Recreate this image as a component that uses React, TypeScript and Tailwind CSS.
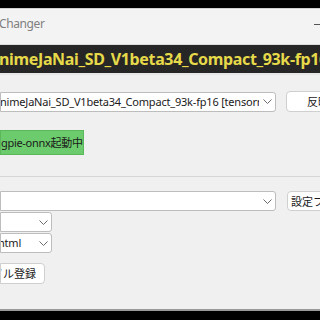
import React from "react";

const font = { fontFamily: '"Noto Sans", "Noto Sans CJK JP", sans-serif' };

const Chevron: React.FC = () => (
  <svg width="9" height="5" viewBox="0 0 9 5" className="shrink-0">
    <path d="M0.5 0.5 L4.5 4.5 L8.5 0.5" fill="none" stroke="#6b6b6b" strokeWidth="1" />
  </svg>
);

const Combo: React.FC<{ text?: string; width: string; shift?: string }> = ({ text, width, shift = "-ml-[1px]" }) => (
  <div
    className={`${width} shrink-0 h-[20px] bg-white border border-[#bdbdbd] rounded-r-[3px] flex items-center pr-[3px] overflow-hidden`}
  >
    <div className="flex-1 min-w-0 overflow-hidden">
      <span className={`block text-[11px] tracking-[-0.2px] text-[#1a1a1a] whitespace-nowrap leading-[16px] ${shift}`}>
        {text}
      </span>
    </div>
    <div className="w-[9px] ml-[4px]">
      <Chevron />
    </div>
  </div>
);

export default function App() {
  return (
    <div className="w-[320px] h-[320px] bg-black overflow-hidden flex flex-col" style={font}>
      <div className="h-[8px] shrink-0" />
      <div className="h-[303px] shrink-0 bg-[#f0f0f0] flex flex-col border-b-[2px] border-[#9a9a9a]">
        {/* title bar */}
        <div className="h-[37px] bg-[#f3f3f3] border-t border-[#d0d0d0] border-b border-b-[#dcdcdc] flex items-start justify-between pt-[6px]">
          <span className="text-[12px] tracking-[-0.4px] text-[#808080] -ml-[1px]">Changer</span>
          <span className="w-[6px] h-px bg-[#555] mt-[9px]" />
        </div>
        {/* banner */}
        <div className="h-[28px] bg-[#262626] flex items-center overflow-hidden">
          <span className="text-[16px] font-bold text-[#e6d94a] whitespace-nowrap -ml-[1px] tracking-[-0.35px]">
            nimeJaNai_SD_V1beta34_Compact_93k-fp16
          </span>
        </div>
        <div className="h-[2px] bg-[#e6e6e6]" />

        <div className="mt-[16px] flex items-center">
          <Combo width="w-[276px]" text="nimeJaNai_SD_V1beta34_Compact_93k-fp16 [tensorrt]" />
          <div className="ml-[10px] w-[64px] shrink-0 h-[21px] bg-white border border-[#cfcfcf] rounded-[4px] flex items-center justify-center">
            <span className="text-[11px] text-[#1a1a1a] leading-none whitespace-nowrap">反映</span>
          </div>
        </div>

        <div className="mt-[18px] w-[84px] h-[25px] bg-[#6ccb6c] border border-[#5ab85a] flex items-center overflow-hidden">
          <span className="text-[11px] tracking-[-0.3px] text-[#1a1a1a] whitespace-nowrap leading-none">gpie-onnx起動中</span>
        </div>

        <div className="mt-[21px] h-[2px] border-t border-[#d6d6d6]" />
        <div className="mt-[13px] flex items-center">
          <Combo width="w-[276px]" />
          <div className="ml-[11px] w-[80px] shrink-0 h-[20px] bg-white border border-[#cfcfcf] rounded-[4px] flex items-center pl-[3px]">
            <span className="text-[11px] text-[#1a1a1a] leading-none whitespace-nowrap">設定ファイル</span>
          </div>
        </div>
        <div className="mt-px">
          <Combo width="w-[52px]" />
        </div>
        <div className="mt-px">
          <Combo width="w-[52px]" text="html" shift="-ml-[3px]" />
        </div>
        <div className="mt-[10px] w-[45px] h-[21px] bg-white border border-[#cfcfcf] rounded-r-[4px] flex items-center justify-end pr-[8px] overflow-hidden">
          <span className="text-[11px] text-[#1a1a1a] leading-none whitespace-nowrap">ファイル登録</span>
        </div>
      </div>
    </div>
  );
}
